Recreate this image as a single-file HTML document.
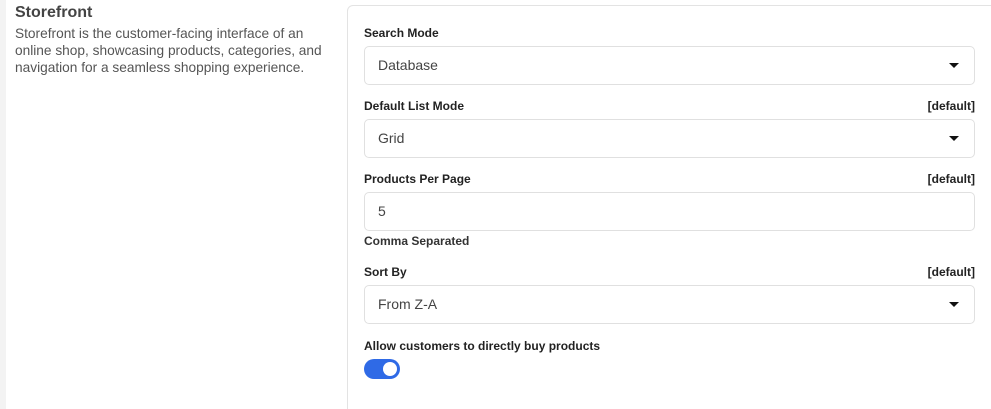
<!DOCTYPE html>
<html style="width:991px;height:409px;overflow:hidden"><head><style>
body{margin:0;width:991px;height:409px;background:#fff;font-family:"Liberation Sans",sans-serif;position:relative;overflow:hidden;color:#333}
.strip{position:absolute;left:0;top:0;width:6px;height:409px;background:#f3f3f3}
h3{position:absolute;left:15px;top:4px;margin:0;font-size:16px;font-weight:bold;color:#444}
.desc{position:absolute;left:15px;top:25px;width:325px;font-size:13.7px;line-height:17px;color:#555}
.card{position:absolute;left:347px;top:5px;width:660px;height:420px;border:1px solid #e3e3e3;border-radius:6px}
.lbl{position:absolute;left:364px;font-size:12px;font-weight:bold;color:#222}
.def{position:absolute;right:16px;font-size:12px;font-weight:bold;color:#222}
.inp{position:absolute;left:364px;width:609px;height:37px;border:1px solid #e0e0e0;border-radius:5px;font-size:14px;color:#444;line-height:37px;text-indent:13px;box-sizing:content-box}
.car{position:absolute;right:15px;top:16px;width:0;height:0;border-left:5px solid transparent;border-right:5px solid transparent;border-top:5px solid #111}
.tog{position:absolute;left:364px;top:359px;width:36px;height:20px;border-radius:10px;background:#2f6ae6}
.tog::after{content:"";position:absolute;right:3px;top:3px;width:14px;height:14px;border-radius:50%;background:#fff}
</style></head><body>
<div class="strip"></div>
<h3>Storefront</h3>
<div class="desc">Storefront is the customer-facing interface of an online shop, showcasing products, categories, and navigation for a seamless shopping experience.</div>
<div class="card"></div>
<div class="lbl" style="top:26px">Search Mode</div>
<div class="inp" style="top:46px">Database<div class="car"></div></div>
<div class="lbl" style="top:99px">Default List Mode</div><div class="def" style="top:99px">[default]</div>
<div class="inp" style="top:119px">Grid<div class="car"></div></div>
<div class="lbl" style="top:172px">Products Per Page</div><div class="def" style="top:172px">[default]</div>
<div class="inp" style="top:192px">5</div>
<div class="lbl" style="top:234px;color:#333">Comma Separated</div>
<div class="lbl" style="top:265px">Sort By</div><div class="def" style="top:265px">[default]</div>
<div class="inp" style="top:285px">From Z-A<div class="car"></div></div>
<div class="lbl" style="top:339px">Allow customers to directly buy products</div>
<div class="tog"></div>
</body></html>
